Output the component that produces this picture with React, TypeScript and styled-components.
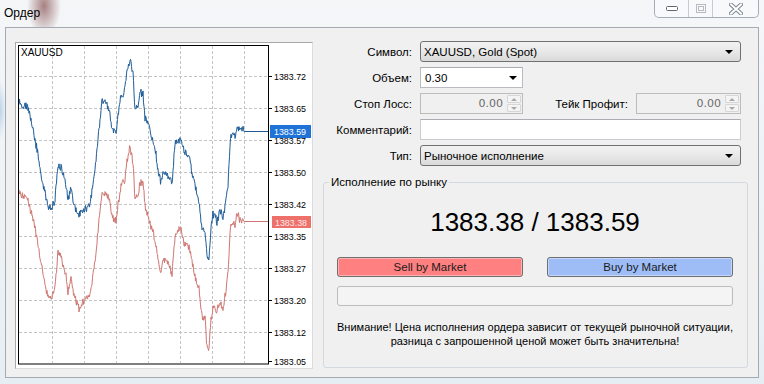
import React from 'react';
import styled, { createGlobalStyle } from 'styled-components';

const GlobalStyle = createGlobalStyle`
  html, body {
    margin: 0;
    padding: 0;
  }
  body {
    width: 764px;
    height: 384px;
    overflow: hidden;
    font-family: "Liberation Sans", Arial, sans-serif;
    font-size: 11.5px;
    color: #000;
  }
`;

const Window = styled.div`
  width: 764px;
  height: 384px;
  box-sizing: border-box;
  display: flex;
  flex-direction: column;
  background:
    radial-gradient(ellipse 17px 30px at 44px 6px, rgba(115, 50, 50, 0.6), rgba(115, 50, 50, 0) 100%),
    radial-gradient(ellipse 6px 30px at 0px 110px, rgba(90, 150, 210, 0.35), rgba(90, 150, 210, 0) 100%),
    linear-gradient(180deg, #f4f6f8 0%, #eef2f5 60%, #e7eef3 100%);
`;

const TitleBar = styled.div`
  height: 27px;
  display: flex;
  align-items: flex-start;
  justify-content: space-between;
  padding-left: 4px;
`;

const Title = styled.span`
  line-height: 27px;
  font-size: 12px;
`;

const Controls = styled.div`
  display: flex;
  height: 17px;
  margin-right: 5px;
  border: 1px solid #a4adb7;
  border-top: none;
  border-radius: 0 0 5px 5px;
  background: rgba(255, 255, 255, 0.4);
  overflow: hidden;
`;

const CtrlButton = styled.div<{ $w: number }>`
  width: ${p => p.$w}px;
  display: flex;
  align-items: center;
  justify-content: center;

  & + & {
    border-left: 1px solid #c6ccd3;
  }
`;

const Client = styled.div`
  flex: 1;
  margin: 0 5px 6px;
  border: 1px solid #a3aab2;
  background: #f0f0f0;
  display: flex;
  min-height: 0;
`;

const ChartPanel = styled.div`
  width: 298px;
  height: 327px;
  box-sizing: border-box;
  margin: 14px 0 0 9px;
  border: 1px solid #a8a8a8;
  border-right-color: #dcdcdc;
  border-bottom-color: #dcdcdc;
  background: #fff;
  flex-shrink: 0;

  svg {
    display: block;
  }
`;

const Form = styled.div`
  flex: 1;
  min-width: 0;
  display: flex;
  flex-direction: column;
  padding: 13px 10px 9px 9px;
`;

const Fields = styled.div`
  display: grid;
  grid-template-columns: 90px 1fr;
  column-gap: 8px;
  row-gap: 5px;
  align-items: center;
  margin-right: 7px;
`;

const Label = styled.span`
  text-align: right;
  white-space: nowrap;
`;

const Combo = styled.div<{ $width?: number }>`
  height: 21px;
  width: ${p => (p.$width ? `${p.$width}px` : 'auto')};
  box-sizing: border-box;
  border: 1px solid #707070;
  border-radius: 3px;
  background: linear-gradient(180deg, #f3f3f3 0%, #e8e8e8 50%, #dadada 100%);
  display: flex;
  align-items: center;
  justify-content: space-between;
  padding: 0 7px 0 3px;
`;

const EditCombo = styled.div<{ $width: number }>`
  height: 21px;
  width: ${p => p.$width}px;
  box-sizing: border-box;
  border: 1px solid #b9bcc0;
  border-top-color: #a9acb1;
  background: #fff;
  display: flex;
  align-items: center;
  justify-content: space-between;
  padding: 0 5px 0 4px;
`;

const Arrow = styled.span`
  width: 0;
  height: 0;
  border-left: 4px solid transparent;
  border-right: 4px solid transparent;
  border-top: 4px solid #000;
`;

const InlineRow = styled.div`
  display: flex;
  align-items: center;
  gap: 8px;
`;

const InlineLabel = styled(Label)`
  flex: 1;
`;

const Spin = styled.div<{ $width: number }>`
  height: 21px;
  width: ${p => p.$width}px;
  flex-shrink: 0;
  box-sizing: border-box;
  border: 1px solid #bcbcbc;
  background: #f0f0f0;
  display: flex;
  align-items: center;
  padding: 1px 1px 1px 4px;
  color: #6d6d6d;
  font-family: "DejaVu Sans", "Noto Sans", sans-serif;
  font-size: 11px;
`;

const SpinValue = styled.span`
  flex: 1;
  text-align: right;
  padding-right: 4px;
`;

const SpinButtons = styled.div`
  width: 14px;
  height: 100%;
  display: flex;
  flex-direction: column;
  gap: 1px;
`;

const SpinButton = styled.div<{ $up?: boolean }>`
  flex: 1;
  border: 1px solid #d6d6d6;
  border-radius: 1px;
  background: #f4f4f4;
  display: flex;
  align-items: center;
  justify-content: center;

  &::after {
    content: '';
    border-left: 3px solid transparent;
    border-right: 3px solid transparent;
    ${p => (p.$up ? 'border-bottom: 3px solid #a8a8a8;' : 'border-top: 3px solid #a8a8a8;')}
  }
`;

const TextBox = styled.div`
  height: 21px;
  box-sizing: border-box;
  border: 1px solid #c9ccd0;
  border-top-color: #abadb3;
  background: #fff;
`;

const Group = styled.fieldset`
  flex: 1;
  margin: 8px 0 0 1px;
  padding: 0 14px 0 13px;
  border: 1px solid #d3d9de;
  border-radius: 3px;
  min-width: 0;
  display: flex;
  flex-direction: column;
`;

const Legend = styled.legend`
  margin-left: -8px;
  padding: 0 2px;
  line-height: 16px;
`;

const Price = styled.div`
  margin-top: 17px;
  text-align: center;
  font-size: 26px;
  line-height: 30px;
  color: #000;
`;

const Buttons = styled.div`
  margin-top: 20px;
  display: grid;
  grid-template-columns: 1fr 1fr;
  gap: 24px;
`;

const TradeButton = styled.div<{ $kind: 'sell' | 'buy' }>`
  height: 20px;
  box-sizing: border-box;
  border: 1px solid #6f6f6f;
  border-radius: 3px;
  box-shadow: inset 0 0 0 1px ${p => (p.$kind === 'sell' ? '#ffb0b0' : '#c4d6fb')};
  background: ${p => (p.$kind === 'sell' ? '#ff8080' : '#9ebdf7')};
  display: flex;
  align-items: center;
  justify-content: center;
  color: #1a1a1a;
`;

const Progress = styled.div`
  margin-top: 9px;
  height: 20px;
  box-sizing: border-box;
  border: 1px solid #bcbcbc;
  border-radius: 3px;
  background: #f4f4f4;
`;

const Warning = styled.div`
  margin: 14px -8px 0;
  text-align: center;
  font-size: 11px;
  line-height: 14px;
  white-space: nowrap;
`;

// price path key points in page coordinates (ask line); bid sits ~90px lower
const keys: [number, number][] = [
  [19, 103], [24, 106], [28, 108], [32, 125], [36, 145], [40, 168], [44, 190], [48, 205],
  [52, 208], [55, 198], [58, 163], [62, 168], [66, 185], [68, 200], [71, 188], [74, 208],
  [79, 217], [84, 210], [90, 205], [95, 170], [99, 130], [102, 100], [106, 103], [109, 110],
  [112, 128], [116, 132], [118, 115], [121, 96], [125, 90], [127, 70], [130, 58], [133, 72],
  [135, 110], [138, 106], [140, 92], [143, 92], [145, 118], [149, 127], [152, 140], [155, 148],
  [158, 170], [161, 182], [164, 170], [168, 175], [172, 185], [175, 145], [178, 137], [181, 140],
  [184, 152], [188, 155], [192, 173], [196, 190], [199, 200], [202, 228], [205, 230], [207, 255],
  [209, 258], [211, 230], [213, 216], [217, 220], [220, 210], [223, 218], [226, 200], [228, 183],
  [230, 143], [232, 130], [235, 137], [237, 125], [240, 128], [243, 131],
];

const noise = (i: number, seed: number) => {
  const v = Math.sin(i * 127.1 + seed * 311.7) * 43758.5453;
  return v - Math.floor(v);
};

// half-pixel samples give the hairy tick-by-tick look of the terminal's line chart
const buildLine = (offset: number, seed: number, endY: number) => {
  const pts: string[] = [];
  let k = 0;
  for (let i = 0; i <= (243 - 19) * 2; i++) {
    const x = 19 + i / 2;
    while (k < keys.length - 2 && keys[k + 1][0] < x) k++;
    const [x0, y0] = keys[k];
    const [x1, y1] = keys[k + 1];
    const t = Math.min(1, Math.max(0, (x - x0) / (x1 - x0)));
    const jitter = (noise(i, seed) - 0.5) * 7 + (noise(Math.floor(i / 5), seed + 3) - 0.5) * 4;
    const y = y0 + (y1 - y0) * t + offset + jitter;
    pts.push(`${x},${y.toFixed(1)}`);
  }
  pts.push(`244,${endY}`, `268,${endY}`);
  return pts.join(' ');
};

const levels = [
  { y: 76, v: '1383.72' },
  { y: 108, v: '1383.65' },
  { y: 140, v: '1383.57' },
  { y: 172, v: '1383.50' },
  { y: 204, v: '1383.42' },
  { y: 236, v: '1383.35' },
  { y: 268, v: '1383.27' },
  { y: 300, v: '1383.20' },
  { y: 332, v: '1383.12' },
];
const columns = [52, 84, 116, 148, 180, 212, 244];

const Chart: React.FC = () => {
  const ask = React.useMemo(() => buildLine(0, 1, 131.5), []);
  const bid = React.useMemo(() => buildLine(90, 7, 221.5), []);
  const axisFont = { fontFamily: '"Liberation Sans", Arial, sans-serif', fontSize: 9.5 };

  return (
    <svg width="296" height="325" viewBox="16 43 296 325">
      {levels.map(l => (
        <line key={l.y} x1="19" x2="267" y1={l.y + 0.5} y2={l.y + 0.5} stroke="#c4c4c4" strokeDasharray="3 2" />
      ))}
      {columns.map(c => (
        <line key={c} x1={c + 0.5} x2={c + 0.5} y1="46" y2="363" stroke="#c4c4c4" strokeDasharray="3 2" />
      ))}
      <polyline points={bid} fill="none" stroke="#cf7670" strokeWidth="1" strokeLinejoin="bevel" />
      <polyline points={ask} fill="none" stroke="#1d5c98" strokeWidth="1" strokeLinejoin="bevel" />
      <rect x="18.5" y="45.5" width="250" height="318.5" fill="none" stroke="#000" />
      <text x="21" y="56" {...axisFont} fontSize="10" fill="#000">XAUUSD</text>
      {[...levels, { y: 361, v: '1383.05' }].map(l => (
        <g key={l.v}>
          <line x1="268" x2="272" y1={l.y + 0.5} y2={l.y + 0.5} stroke="#000" />
          <text x="274" y={l.y + 3.5} {...axisFont} fill="#000" textLength="32" lengthAdjust="spacingAndGlyphs">
            {l.v}
          </text>
        </g>
      ))}
      <rect x="270" y="125" width="41" height="13" fill="#1f73d6" />
      <text x="274" y="135" {...axisFont} fill="#fff" textLength="32" lengthAdjust="spacingAndGlyphs">1383.59</text>
      <rect x="272" y="216" width="39" height="12" fill="#ee706b" />
      <text x="275" y="225.5" {...axisFont} fill="#fde8e8" textLength="32" lengthAdjust="spacingAndGlyphs">1383.38</text>
    </svg>
  );
};

const App: React.FC = () => {
  return (
    <>
      <GlobalStyle />
      <Window>
        <TitleBar>
          <Title>Ордер</Title>
          <Controls>
            <CtrlButton $w={33}>
              <svg width="12" height="6" viewBox="0 0 12 6">
                <rect x="0.5" y="0.5" width="11" height="4" rx="1" fill="#fff" stroke="#5d6670" />
              </svg>
            </CtrlButton>
            <CtrlButton $w={23}>
              <svg width="10" height="9" viewBox="0 0 10 9">
                <rect x="0.5" y="0.5" width="9" height="8" fill="none" stroke="#b5bcc4" />
                <rect x="2.5" y="2.5" width="5" height="4" fill="none" stroke="#b5bcc4" />
              </svg>
            </CtrlButton>
            <CtrlButton $w={45}>
              <svg width="14" height="12" viewBox="0 0 14 12">
                <path d="M2 1.5 L12 10.5 M12 1.5 L2 10.5" stroke="#7d8792" strokeWidth="4" strokeLinecap="square" />
                <path d="M2 1.5 L12 10.5 M12 1.5 L2 10.5" stroke="#fff" strokeWidth="2" strokeLinecap="square" />
              </svg>
            </CtrlButton>
          </Controls>
        </TitleBar>
        <Client>
          <ChartPanel>
            <Chart />
          </ChartPanel>
          <Form>
            <Fields>
              <Label>Символ:</Label>
              <Combo>
                <span>XAUUSD, Gold (Spot)</span>
                <Arrow />
              </Combo>
              <Label>Объем:</Label>
              <EditCombo $width={103}>
                <span>0.30</span>
                <Arrow />
              </EditCombo>
              <Label>Стоп Лосс:</Label>
              <InlineRow>
                <Spin $width={103}>
                  <SpinValue>0.00</SpinValue>
                  <SpinButtons>
                    <SpinButton $up />
                    <SpinButton />
                  </SpinButtons>
                </Spin>
                <InlineLabel>Тейк Профит:</InlineLabel>
                <Spin $width={105}>
                  <SpinValue>0.00</SpinValue>
                  <SpinButtons>
                    <SpinButton $up />
                    <SpinButton />
                  </SpinButtons>
                </Spin>
              </InlineRow>
              <Label>Комментарий:</Label>
              <TextBox />
              <Label>Тип:</Label>
              <Combo>
                <span>Рыночное исполнение</span>
                <Arrow />
              </Combo>
            </Fields>
            <Group>
              <Legend>Исполнение по рынку</Legend>
              <Price>1383.38 / 1383.59</Price>
              <Buttons>
                <TradeButton $kind="sell">Sell by Market</TradeButton>
                <TradeButton $kind="buy">Buy by Market</TradeButton>
              </Buttons>
              <Progress />
              <Warning>
                Внимание! Цена исполнения ордера зависит от текущей рыночной ситуации,
                <br />
                разница с запрошенной ценой может быть значительна!
              </Warning>
            </Group>
          </Form>
        </Client>
      </Window>
    </>
  );
};

export default App;
